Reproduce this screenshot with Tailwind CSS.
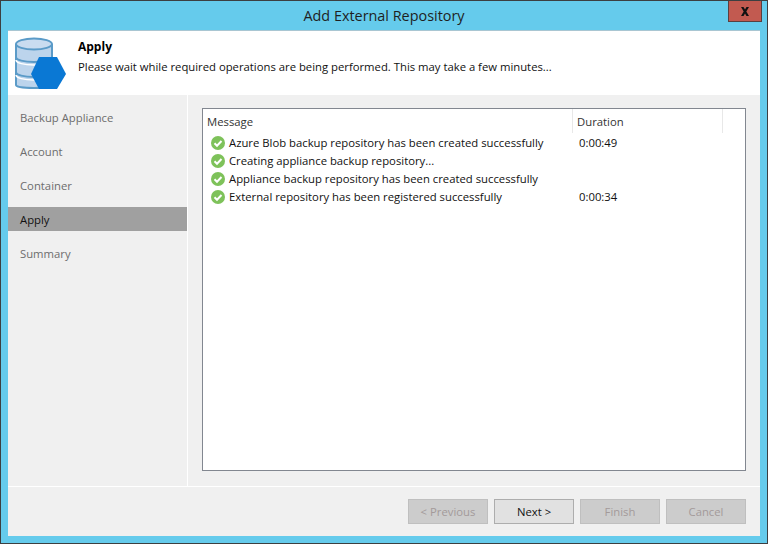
<!DOCTYPE html>
<html lang="en">
<head>
    <meta charset="UTF-8">
    <title>Add External Repository</title>
    <script src="https://cdn.jsdelivr.net/npm/@tailwindcss/browser@4"></script>
</head>
<body class="overflow-hidden">
    <div class="relative w-[768px] h-[544px] flex flex-col bg-[#65cbec] border border-[#3c3f41] font-['Open_Sans','Noto_Sans',sans-serif] text-[11.3px] text-[#111]">
        <!-- title bar -->
        <div class="h-[29px] shrink-0 flex items-center justify-center text-[14.4px] text-[#1f1f1f] pt-[1px]">Add External Repository</div>
        <button class="absolute top-0 right-[5px] w-[34px] h-[21px] bg-[#c25a50] border border-[#5a3f3f] border-t-0 flex items-center justify-center">
            <svg width="10" height="9" viewBox="0 0 10 9"><path d="M1 0h2.500l1.500 2.500 1.500-2.500h2.500l-2.700 4.500 2.700 4.500h-2.500l-1.500-2.500-1.500 2.500h-2.500l2.700-4.500z" fill="#111"/></svg>
        </button>

        <div class="flex-1 mx-[7px] mb-[7px] flex flex-col bg-[#f0f0f0] border-t border-[#a9c6d2] min-h-0">
            <!-- header -->
            <div class="h-[64px] shrink-0 bg-white flex">
                <div class="w-[70px] pl-[6px] pt-[6px] shrink-0">
                    <svg width="54" height="53" viewBox="0 0 54 53">
                        <path d="M2 8v40c0 2 8 3 18 3s18-1 18-3V8z" fill="#bcd4ec" stroke="#5b9bc8" stroke-width="2"/>
                        <path d="M2 20c0 3 8 5 18 5s18-2 18-5M2 35c0 3 8 5 18 5s18-2 18-5" fill="none" stroke="#5b9bc8" stroke-width="2"/>
                        <path d="M2 23c0 3 8 5 18 5s18-2 18-5M2 38c0 3 8 5 18 5s18-2 18-5" fill="none" stroke="#ffffff" stroke-width="1.500"/>
                        <ellipse cx="20" cy="7" rx="18" ry="5.500" fill="#c9dcf0" stroke="#5b9bc8" stroke-width="2"/>
                        <polygon points="17,37 25,20 43,20 52,37 43,52 25,52" fill="#0a78d4"/>
                    </svg>
                </div>
                <div class="pt-[8px]">
                    <div class="font-bold text-[12px] leading-[16px] text-black">Apply</div>
                    <div class="mt-[4px] leading-[16px]">Please wait while required operations are being performed. This may take a few minutes...</div>
                </div>
            </div>

            <div class="flex-1 flex min-h-0">
                <!-- steps -->
                <div class="w-[179px] shrink-0 pt-[5px] text-[#6d6d6d]">
                    <div class="h-[34px] pl-[12px] pt-[2px] flex items-center">Backup Appliance</div>
                    <div class="h-[34px] pl-[12px] pt-[2px] flex items-center">Account</div>
                    <div class="h-[34px] pl-[12px] pt-[2px] flex items-center">Container</div>
                    <div class="h-[24px] my-[5px] pl-[12px] pt-[2px] flex items-center bg-[#a0a0a0] text-[#111]">Apply</div>
                    <div class="h-[34px] pl-[12px] pt-[2px] flex items-center">Summary</div>
                </div>
                <div class="w-px bg-white shrink-0"></div>

                <!-- log list -->
                <div class="flex-1 pt-[13px] pl-[14px] pr-[14px] pb-[15px] min-w-0">
                    <div class="h-full bg-white border border-[#828790] flex flex-col">
                        <div class="h-[24px] shrink-0 flex text-[#333] items-center">
                            <div class="w-[370px] h-full pl-[4px] pt-[2px] flex items-center border-r border-[#e8e8e8]">Message</div>
                            <div class="w-[150px] h-full pl-[4px] pt-[2px] flex items-center border-r border-[#e8e8e8]">Duration</div>
                        </div>
                        <div class="pt-[1px]">
                            <div class="h-[18px] flex items-center">
                                <div class="w-[370px] flex items-center pl-[8px] gap-[4px]">
                                    <svg width="14" height="14" viewBox="0 0 14 14"><circle cx="7" cy="7" r="7" fill="#7ec25a"/><path d="M3.500 7.200l2.500 2.500 4.500-4.700" fill="none" stroke="#fff" stroke-width="2"/></svg>
                                    <span>Azure Blob backup repository has been created successfully</span>
                                </div>
                                <div class="pl-[6px]">0:00:49</div>
                            </div>
                            <div class="h-[18px] flex items-center">
                                <div class="w-[370px] flex items-center pl-[8px] gap-[4px]">
                                    <svg width="14" height="14" viewBox="0 0 14 14"><circle cx="7" cy="7" r="7" fill="#7ec25a"/><path d="M3.500 7.200l2.500 2.500 4.500-4.700" fill="none" stroke="#fff" stroke-width="2"/></svg>
                                    <span>Creating appliance backup repository...</span>
                                </div>
                            </div>
                            <div class="h-[18px] flex items-center">
                                <div class="w-[370px] flex items-center pl-[8px] gap-[4px]">
                                    <svg width="14" height="14" viewBox="0 0 14 14"><circle cx="7" cy="7" r="7" fill="#7ec25a"/><path d="M3.500 7.200l2.500 2.500 4.500-4.700" fill="none" stroke="#fff" stroke-width="2"/></svg>
                                    <span>Appliance backup repository has been created successfully</span>
                                </div>
                            </div>
                            <div class="h-[18px] flex items-center">
                                <div class="w-[370px] flex items-center pl-[8px] gap-[4px]">
                                    <svg width="14" height="14" viewBox="0 0 14 14"><circle cx="7" cy="7" r="7" fill="#7ec25a"/><path d="M3.500 7.200l2.500 2.500 4.500-4.700" fill="none" stroke="#fff" stroke-width="2"/></svg>
                                    <span>External repository has been registered successfully</span>
                                </div>
                                <div class="pl-[6px]">0:00:34</div>
                            </div>
                        </div>
                    </div>
                </div>
            </div>

            <!-- footer -->
            <div class="h-[50px] shrink-0 border-t border-white flex justify-end gap-[6px] pt-[12px] pr-[14px]">
                <button class="w-[80px] h-[25px] pt-[2px] bg-[#cccccc] border border-[#bfbfbf] text-[#a39a9a]">&lt; Previous</button>
                <button class="w-[80px] h-[25px] pt-[2px] bg-[#e1e1e1] border border-[#adadad] text-[#111]">Next &gt;</button>
                <button class="w-[80px] h-[25px] pt-[2px] bg-[#cccccc] border border-[#bfbfbf] text-[#a39a9a]">Finish</button>
                <button class="w-[80px] h-[25px] pt-[2px] bg-[#cccccc] border border-[#bfbfbf] text-[#a39a9a]">Cancel</button>
            </div>
        </div>
    </div>
</body>
</html>
